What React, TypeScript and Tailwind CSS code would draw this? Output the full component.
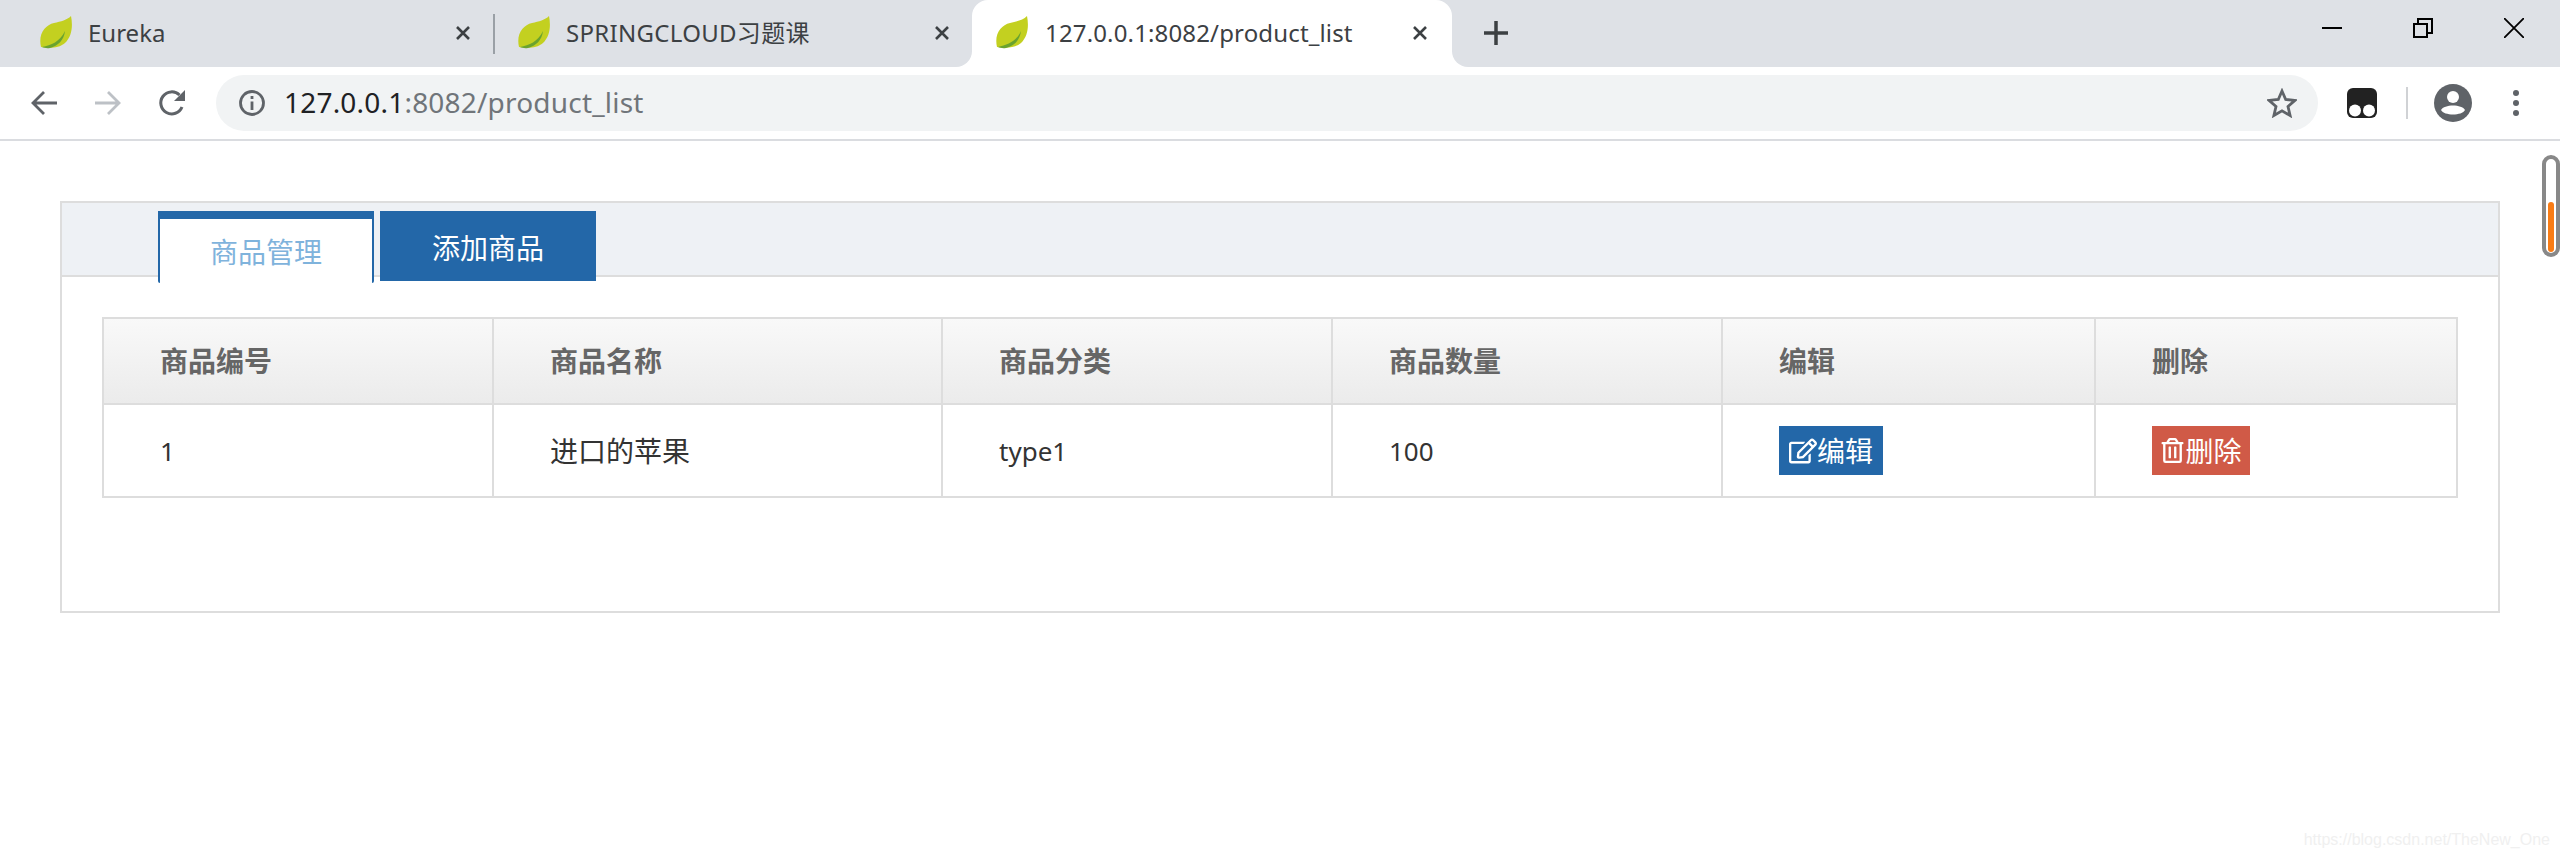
import React from 'react';
import { FaRegEdit, FaRegTrashAlt } from 'react-icons/fa';

const Leaf = () => (
    <svg width="34" height="34" viewBox="0 0 34 34" className="shrink-0 -ml-px">
        <path d="M2 31 C-1 18 6 9 15 7 C22 5.5 28 4 32 0 C34 10 33 20 26 27 C19 33 9 32 2 31 Z" fill="#c3d020" />
        <path d="M3 31 C12 29 21 26 26 15 C25 24 19 30 11 32 C8 32.500 5 32 3 31 Z" fill="#6aa32f" />
    </svg>
);

const CloseIcon = () => (
    <svg width="16" height="16" viewBox="0 0 16 16" className="shrink-0">
        <path d="M2 2 L14 14 M14 2 L2 14" stroke="#3c4043" strokeWidth="2.600" />
    </svg>
);

const Corner = ({ side }: { side: 'left' | 'right' }) => (
    <div className={side === 'left' ? 'absolute bottom-0 -left-4 w-4 h-4 bg-white' : 'absolute bottom-0 -right-4 w-4 h-4 bg-white'}>
        <div className={side === 'left' ? 'w-full h-full bg-[#dee1e6] rounded-br-2xl' : 'w-full h-full bg-[#dee1e6] rounded-bl-2xl'} />
    </div>
);

const TabStrip = () => (
    <div className="flex h-[67px] bg-[#dee1e6] text-[24px] leading-none text-[#3c4043]">
        <div className="flex items-center w-[495px] pl-10 pr-6 gap-[15px] pb-[2px]">
            <Leaf />
            <span className="flex-1">Eureka</span>
            <CloseIcon />
        </div>
        <div className="w-[2px] h-10 mt-[14px] -ml-[2px] bg-[#9aa0a6]" />
        <div className="flex items-center w-[477px] pl-[23px] pr-[22px] gap-[15px] pb-[2px]">
            <Leaf />
            <span className="flex-1 tracking-[0.3px]">SPRINGCLOUD习题课</span>
            <CloseIcon />
        </div>
        <div className="relative flex items-center w-[480px] pl-6 pr-6 gap-4 pb-[2px] bg-white rounded-t-2xl">
            <Corner side="left" />
            <Leaf />
            <span className="flex-1 tracking-[0.15px]">127.0.0.1:8082/product_list</span>
            <CloseIcon />
            <Corner side="right" />
        </div>
        <div className="ml-[32px] mt-[21px]">
            <svg width="24" height="24" viewBox="0 0 24 24">
                <path d="M12 0 V24 M0 12 H24" stroke="#3c4043" strokeWidth="3.500" />
            </svg>
        </div>
        <div className="flex-1" />
        <div className="flex items-start pt-[18px] pr-[36px] gap-[71px]">
            <svg width="20" height="20" viewBox="0 0 20 20">
                <path d="M0 10 H20" stroke="#000" strokeWidth="2" />
            </svg>
            <svg width="20" height="20" viewBox="0 0 20 20">
                <path d="M1 6 H14 V19 H1 Z M5 6 V1 H19 V15 H14" fill="none" stroke="#000" strokeWidth="2" />
            </svg>
            <svg width="20" height="20" viewBox="0 0 20 20">
                <path d="M0 0 L20 20 M20 0 L0 20" stroke="#000" strokeWidth="1.800" />
            </svg>
        </div>
    </div>
);

const Toolbar = () => (
    <div className="flex items-center h-[74px] bg-white border-b-2 border-[#dadce0]">
        <div className="flex items-center pl-[30px] gap-[36px] w-[216px]">
            <svg width="28" height="28" viewBox="0 0 28 28">
                <path d="M27 14 H3 M14 3 L3 14 L14 25" fill="none" stroke="#5f6368" strokeWidth="2.800" />
            </svg>
            <svg width="28" height="28" viewBox="0 0 28 28">
                <path d="M1 14 H25 M14 3 L25 14 L14 25" fill="none" stroke="#bdc1c6" strokeWidth="2.800" />
            </svg>
            <svg width="28" height="28" viewBox="0 0 28 28">
                <path d="M24 18 A11 11 0 1 1 21.500 6" fill="none" stroke="#5f6368" strokeWidth="3" />
                <path d="M27 1 V12 H16 Z" fill="#5f6368" />
            </svg>
        </div>
        <div className="flex items-center w-[2102px] h-14 rounded-full bg-[#f1f3f4] pl-[22px] pr-[21px]">
            <svg width="28" height="28" viewBox="0 0 28 28" className="shrink-0">
                <circle cx="14" cy="14" r="11.500" fill="none" stroke="#5f6368" strokeWidth="2.800" />
                <path d="M14 12.500 V21 M14 7 V10" stroke="#5f6368" strokeWidth="2.800" />
            </svg>
            <span className="flex-1 ml-[18px] text-[28px] tracking-[0.2px] leading-none text-[#70757a] pb-[2px]">
                <span className="text-[#202124]">127.0.0.1</span>:8082/product_list
            </span>
            <svg width="30" height="30" viewBox="0 0 30 30" className="shrink-0">
                <path d="M15 3 L18.700 11.500 L28 12.400 L21 18.500 L23.100 27.500 L15 22.800 L6.900 27.500 L9 18.500 L2 12.400 L11.300 11.500 Z" fill="none" stroke="#5f6368" strokeWidth="2.800" />
            </svg>
        </div>
        <div className="flex items-center pl-[29px]">
            <svg width="30" height="30" viewBox="0 0 30 30">
                <rect width="30" height="30" rx="6" fill="#222" />
                <circle cx="8" cy="22.500" r="6" fill="#fff" />
                <circle cx="22" cy="22.500" r="6" fill="#fff" />
            </svg>
            <div className="w-[2px] h-8 ml-[29px] bg-[#d0d2d5]" />
            <svg width="38" height="38" viewBox="0 0 38 38" className="ml-[26px]">
                <circle cx="19" cy="19" r="19" fill="#5f6368" />
                <circle cx="19" cy="13" r="6" fill="#fff" />
                <path d="M7 26 C10 20 28 20 31 26 C28 32 10 32 7 26 Z" fill="#fff" />
            </svg>
            <svg width="6" height="26" viewBox="0 0 6 26" className="ml-[41px]">
                <circle cx="3" cy="3" r="3" fill="#5f6368" />
                <circle cx="3" cy="13" r="3" fill="#5f6368" />
                <circle cx="3" cy="23" r="3" fill="#5f6368" />
            </svg>
        </div>
    </div>
);

const headers = [
    { label: '商品编号', width: 'w-[390px]' },
    { label: '商品名称', width: 'w-[449px]' },
    { label: '商品分类', width: 'w-[390px]' },
    { label: '商品数量', width: 'w-[390px]' },
    { label: '编辑', width: 'w-[373px]' },
    { label: '删除', width: 'w-[362px]' },
];

const cellClass = 'border-2 border-[#dddddd] pl-[56px] pr-2 text-left';

const ProductTable = () => (
    <table className="table-fixed border-collapse w-[2354px] text-[28px] leading-none">
        <thead>
            <tr className="h-[86px] bg-gradient-to-b from-[#f9f9f9] to-[#ebebeb]">
                {headers.map((h) => (
                    <th key={h.label} className={`${cellClass} ${h.width} font-bold text-[#666666]`}>
                        {h.label}
                    </th>
                ))}
            </tr>
        </thead>
        <tbody>
            <tr className="h-[93px] text-[#333333]">
                <td className={`${cellClass} text-[26px]`}>1</td>
                <td className={cellClass}>进口的苹果</td>
                <td className={`${cellClass} text-[26px]`}>type1</td>
                <td className={`${cellClass} text-[26px]`}>100</td>
                <td className={cellClass}>
                    <a className="inline-flex items-center justify-center w-[104px] h-[49px] bg-[#2367a8] text-white align-middle">
                        <FaRegEdit className="text-[28px]" />
                        <span>编辑</span>
                    </a>
                </td>
                <td className={cellClass}>
                    <a className="inline-flex items-center justify-center w-[98px] h-[49px] bg-[#d05a47] text-white align-middle">
                        <FaRegTrashAlt className="text-[25px]" />
                        <span>删除</span>
                    </a>
                </td>
            </tr>
        </tbody>
    </table>
);

const App = () => {
    return (
        <div className="relative h-[856px] overflow-hidden bg-white font-['Noto_Sans','Noto_Sans_CJK_SC',sans-serif]">
            <TabStrip />
            <Toolbar />

            <div className="pt-[60px] pl-[60px]">
                <div className="w-[2440px] border-2 border-[#dddddd]">
                    <div className="flex items-start h-[74px] pt-2 pl-[96px] gap-[6px] bg-[#eef1f5] border-b-2 border-[#dddddd] text-[28px]">
                        <div className="flex items-center justify-center w-[216px] h-[72px] pt-[2px] bg-white border-x-2 border-t-8 border-[#2367a8] text-[#7fb3dc] rounded-b-[2px]">
                            商品管理
                        </div>
                        <div className="flex items-center justify-center w-[216px] h-[70px] pt-[4px] bg-[#2367a8] text-white">
                            添加商品
                        </div>
                    </div>
                    <div className="pt-[40px] pb-[113px] px-[40px]">
                        <ProductTable />
                    </div>
                </div>
            </div>

            {/* extension widget stuck over the page's right edge */}
            <div className="absolute top-[155px] right-0 w-[18px] h-[102px] border-[4px] border-[#888888] rounded-full bg-white">
                <div className="absolute left-[2px] bottom-[1px] w-[6px] h-[50px] rounded-full bg-[#f97c15]" />
            </div>

            <div className="absolute right-[10px] bottom-[8px] text-[16px] leading-none text-[#f0f0f0] font-['Liberation_Sans',sans-serif]">
                https://blog.csdn.net/TheNew_One
            </div>
        </div>
    );
};

export default App;
